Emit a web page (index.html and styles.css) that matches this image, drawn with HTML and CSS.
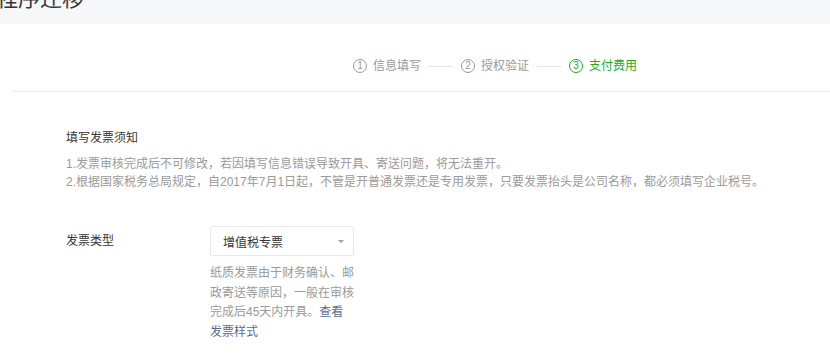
FILE: index.html
```html
<!DOCTYPE html>
<html lang="zh-CN">
<head>
    <meta charset="UTF-8">
    <meta name="viewport" content="width=device-width, initial-scale=1.0">
    <title>小程序迁移</title>
    <link rel="stylesheet" href="styles.css">
</head>
<body>
    <div class="top">
        <h1 class="page-title">程序迁移</h1>
    </div>

    <div class="panel">
        <div class="steps">
            <div class="step"><span class="num">1</span>信息填写</div>
            <span class="step-line"></span>
            <div class="step"><span class="num">2</span>授权验证</div>
            <span class="step-line"></span>
            <div class="step current"><span class="num">3</span>支付费用</div>
        </div>

        <div class="notice">
            <h3>填写发票须知</h3>
            <p>1.发票审核完成后不可修改，若因填写信息错误导致开具、寄送问题，将无法重开。</p>
            <p>2.根据国家税务总局规定，自2017年7月1日起，不管是开普通发票还是专用发票，只要发票抬头是公司名称，都必须填写企业税号。</p>
        </div>

        <div class="form-row">
            <label class="form-label">发票类型</label>
            <div class="form-field">
                <div class="select">
                    <span>增值税专票</span>
                    <span class="arrow"></span>
                </div>
                <p class="help">纸质发票由于财务确认、邮政寄送等原因，一般在审核完成后45天内开具。<a href="#">查看发票样式</a></p>
            </div>
        </div>
    </div>
</body>
</html>
```

FILE: styles.css
```css
body {
    margin: 0;
    padding: 0;
    font-family: "Liberation Sans", "Noto Sans CJK SC", sans-serif;
    font-size: 12px;
    color: #353535;
    background-color: #fff;
}
.top {
    height: 24px;
    background-color: #f6f7f9;
    overflow: hidden;
}
.page-title {
    margin: -14px 0 0 -4px;
    font-size: 22px;
    font-weight: normal;
    line-height: 26px;
    color: #353535;
}
.panel {
    margin-left: 13px;
}
.steps {
    display: flex;
    align-items: center;
    padding: 33px 0 16px 340px;
    border-bottom: 1px solid #e7e7eb;
    line-height: 18px;
    color: #9a9a9a;
}
.step {
    display: flex;
    align-items: center;
}
.num {
    display: inline-flex;
    align-items: center;
    justify-content: center;
    width: 12px;
    height: 12px;
    margin-right: 6px;
    border: 1px solid #9a9a9a;
    border-radius: 50%;
    font-size: 10px;
    line-height: 1;
}
.step.current {
    color: #1aad19;
}
.step.current .num {
    border-color: #1aad19;
}
.step-line {
    width: 24px;
    height: 1px;
    margin: 0 8px;
    background-color: #e4e4e4;
}
.notice {
    margin: 37px 0 0 53px;
}
.notice h3 {
    margin: 0 0 8px;
    font-size: 12px;
    font-weight: normal;
    line-height: 18px;
}
.notice p {
    margin: 0;
    line-height: 18px;
    color: #9a9a9a;
}
.form-row {
    display: flex;
    margin: 35px 0 0 53px;
}
.form-label {
    width: 144px;
    line-height: 30px;
}
.form-field {
    width: 144px;
}
.select {
    display: flex;
    align-items: center;
    justify-content: space-between;
    height: 28px;
    padding: 0 9px 0 12px;
    border: 1px solid #e7e7eb;
    border-radius: 2px;
}
.arrow {
    width: 0;
    height: 0;
    border-left: 3px solid transparent;
    border-right: 3px solid transparent;
    border-top: 3px solid #a0a0a0;
}
.help {
    margin: 8px 0 0;
    line-height: 19.5px;
    color: #9a9a9a;
}
.help a {
    color: #576b95;
    text-decoration: none;
}
```
